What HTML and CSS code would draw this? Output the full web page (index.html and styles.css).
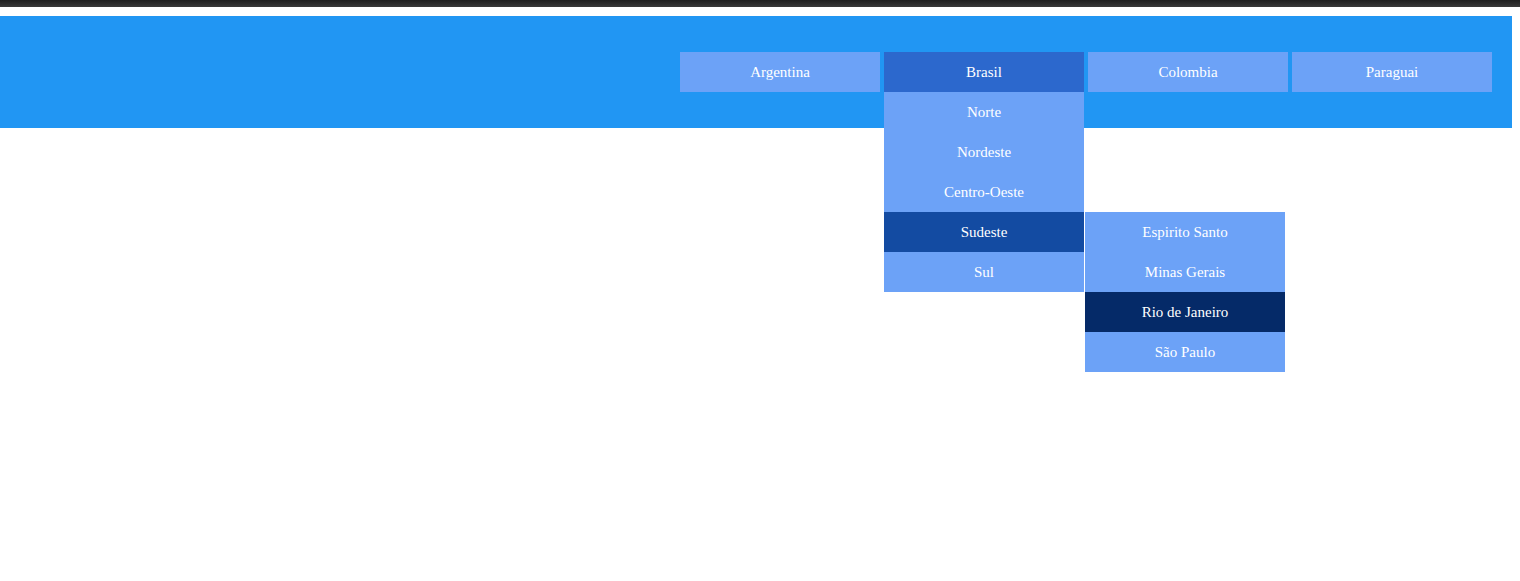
FILE: index.html
```html
<!DOCTYPE html>
<html lang="pt-BR">
  <head>
    <meta charset="utf-8">
    <title>Menu</title>
    <link rel="stylesheet" href="styles.css">
  </head>
  <body>
    <div class="topbar"></div>

    <header class="header">
      <ul class="menu">
        <li class="menu-item">Argentina</li>
        <li class="menu-item open">Brasil
          <ul class="submenu">
            <li class="menu-item">Norte</li>
            <li class="menu-item">Nordeste</li>
            <li class="menu-item">Centro-Oeste</li>
            <li class="menu-item open">Sudeste
              <ul class="submenu side">
                <li class="menu-item">Espirito Santo</li>
                <li class="menu-item">Minas Gerais</li>
                <li class="menu-item current">Rio de Janeiro</li>
                <li class="menu-item">São Paulo</li>
              </ul>
            </li>
            <li class="menu-item">Sul</li>
          </ul>
        </li>
        <li class="menu-item">Colombia</li>
        <li class="menu-item">Paraguai</li>
      </ul>
    </header>
  </body>
</html>
```

FILE: styles.css
```css
html,
body {
  min-height: 100vh;
}

body {
  margin: 0;
  background: #fff;
  font-family: "Liberation Serif", "Times New Roman", serif;
  font-size: 15px;
}

.topbar {
  height: 7px;
  background: linear-gradient(#1f1f1f, #2e2e2e 60%, #3a3a3a);
}

.header {
  margin: 9px 8px 0 0;
  padding: 36px 20px;
  background: #2196f3;
}

.menu,
.submenu {
  list-style: none;
  margin: 0;
  padding: 0;
}

.menu {
  display: flex;
  justify-content: flex-end;
  gap: 4px;
}

.menu-item {
  position: relative;
  width: 200px;
  height: 40px;
  line-height: 40px;
  text-align: center;
  color: #fff;
  background: #6ca2f7;
}

.menu > .menu-item.open {
  background: #2c68cd;
}

/* dropdowns hang below (or beside) their parent item */
.submenu {
  position: absolute;
  top: 40px;
  left: 0;
  z-index: 2;
}

.submenu .menu-item.open {
  background: #134ba2;
}

.submenu.side {
  top: 0;
  left: 201px;
}

.menu-item.current {
  background: #052a68;
}
```
